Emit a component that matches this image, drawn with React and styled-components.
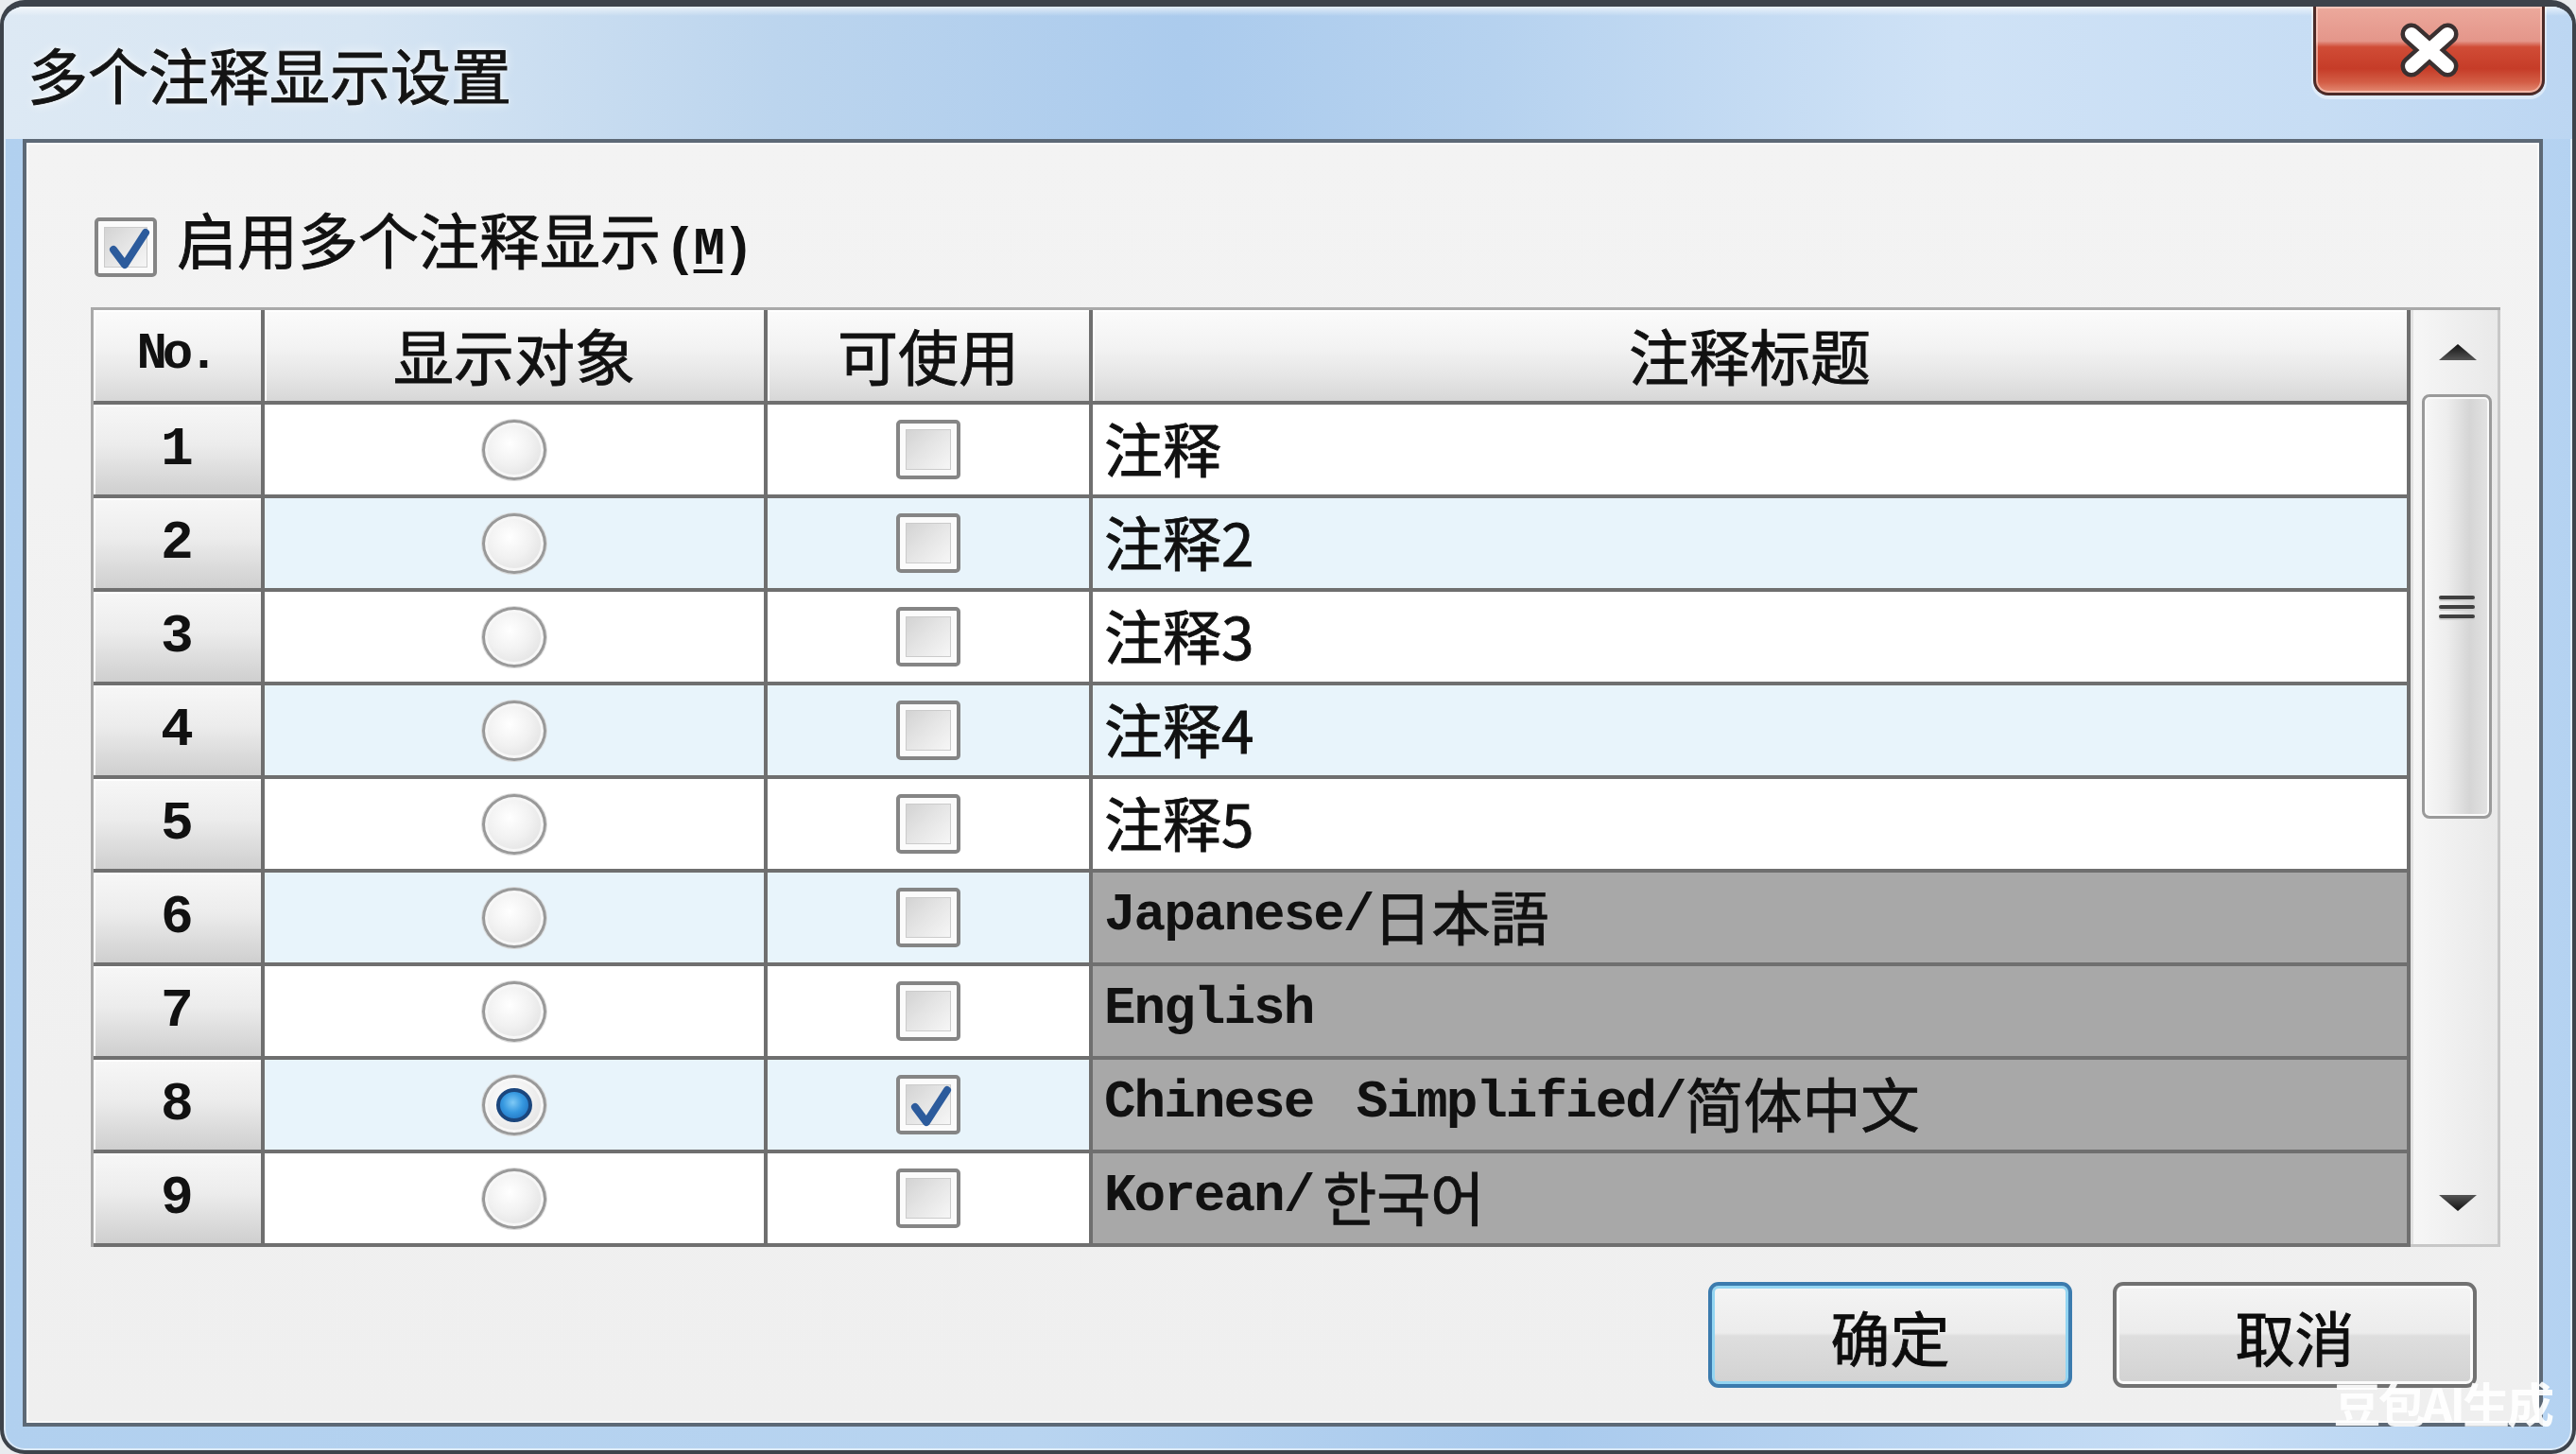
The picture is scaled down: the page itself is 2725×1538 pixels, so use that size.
import React from 'react';
import styled, { createGlobalStyle } from 'styled-components';

const CJK = `"Noto Sans CJK SC", "Noto Sans CJK JP", "Noto Sans CJK KR", "Noto Sans", sans-serif`;
const MONO = `"Liberation Mono", "DejaVu Sans Mono", "Noto Sans CJK SC", monospace`;

/* slightly heavier strokes for the dialog's CJK text */
const heavy = `-webkit-text-stroke: 0.9px currentColor;`;

const GlobalStyle = createGlobalStyle`
  html, body { margin: 0; padding: 0; background: #e9ecef; }
  body { font-family: ${CJK}; }
  *, *::before, *::after { box-sizing: border-box; }
`;

/* ---------- window frame ---------- */

const Window = styled.div`
  position: relative;
  width: 2725px;
  height: 1538px;
  display: flex;
  flex-direction: column;
  border: 4px solid #3d434b;
  border-top-width: 7px;
  border-radius: 26px;
  overflow: hidden;
  background: linear-gradient(90deg, #b1d0ef 0%, #b8d4f0 40%, #a9caed 60%, #c6ddf5 85%, #b4d2f1 100%);
  box-shadow: inset 0 0 0 2px rgba(255, 255, 255, 0.55);
`;

const TitleBar = styled.div`
  flex: none;
  height: 140px;
  display: flex;
  align-items: center;
  padding-left: 25px;
  background:
    linear-gradient(180deg, rgba(255, 255, 255, 0.65) 0px, rgba(255, 255, 255, 0) 10px),
    linear-gradient(90deg, #dde9f4 0%, #d6e5f3 14%, #bcd5ee 30%, #abcbed 46%, #b6d2ef 58%, #cfe2f6 76%, #c7ddf4 90%, #bcd6f2 100%);
`;

const Title = styled.h1`
  margin: 0;
  font-family: ${CJK};
  font-weight: 400;
  font-size: 64px;
  line-height: 1;
  color: #141414;
  ${heavy}
  text-shadow: 0 0 12px rgba(255, 255, 255, 0.95), 0 0 4px rgba(255, 255, 255, 0.8);
`;

const CloseButton = styled.div`
  margin-left: auto;
  margin-right: 29px;
  align-self: flex-start;
  width: 245px;
  height: 94px;
  display: flex;
  align-items: center;
  justify-content: center;
  border: 3px solid #4b2a27;
  border-top: none;
  border-radius: 0 0 16px 16px;
  background: linear-gradient(180deg, #eca99c 0%, #e4968a 40%, #d04c36 47%, #c63c28 72%, #d35e46 88%, #e58d76 100%);
  box-shadow: inset 0 0 0 2px rgba(255, 222, 212, 0.55), 0 2px 0 2px rgba(255, 255, 255, 0.45);
`;

const CloseGlyph = () => (
  <svg width="68" height="58" viewBox="0 0 68 58">
    <g strokeLinecap="round">
      <path d="M15 12 L53 46 M53 12 L15 46" stroke="#3a3030" strokeWidth="23" />
      <path d="M15 12 L53 46 M53 12 L15 46" stroke="#ffffff" strokeWidth="14" />
    </g>
  </svg>
);

const ClientArea = styled.div`
  flex: 1;
  margin: 0 31px 25px 20px;
  display: flex;
  flex-direction: column;
  border: 4px solid #5d6976;
  background: linear-gradient(180deg, #f3f3f3 0%, #efefef 100%);
  box-shadow: inset 0 0 0 2px #fafafa;
`;

/* ---------- option checkbox ---------- */

const OptionRow = styled.label`
  margin: 79px 0 0 72px;
  height: 63px;
  display: flex;
  align-items: center;
  gap: 21px;
  font-family: ${CJK};
  font-size: 64px;
  color: #111;
  ${heavy}
`;

const OptionText = styled.span`
  line-height: 1;
  padding-bottom: 12px;
`;

const Mnemonic = styled.span`
  font-family: ${MONO};
  font-weight: 700;
  font-size: 56px;
  letter-spacing: -3px;
  margin-left: 4px;
  -webkit-text-stroke: 0;
  u { text-decoration-thickness: 4px; text-underline-offset: 6px; }
`;

const Box = styled.span`
  position: relative;
  flex: none;
  width: ${(p) => p.$w || 68}px;
  height: 63px;
  border: 4px solid #858585;
  border-radius: 5px;
  background: #fbfbfb;
  padding: 6px;
  display: flex;
`;

const BoxFace = styled.span`
  flex: 1;
  border: 1px solid #cbcbcb;
  background: linear-gradient(135deg, #d3d3d3 0%, #e4e4e4 45%, #f6f6f6 100%);
`;

const Tick = styled.svg`
  position: absolute;
  left: 6px;
  top: 2px;
`;

const CheckBox = ({ checked, w }) => (
  <Box $w={w}>
    <BoxFace />
    {checked && (
      <Tick width="52" height="52" viewBox="0 0 52 52">
        <path d="M10 28 L22 44 L44 10" fill="none" stroke="#2c5b9c" strokeWidth="8" strokeLinecap="round" strokeLinejoin="round" />
      </Tick>
    )}
  </Box>
);

/* ---------- table ---------- */

const Table = styled.div`
  margin: 32px 0 0 68px;
  width: 2549px;
  display: grid;
  grid-template-columns: 181px 532px 344px 1394px 95px;
  grid-template-rows: 100px repeat(9, 99px);
  border-top: 3px solid #a9a9a9;
  border-left: 3px solid #a9a9a9;
`;

const gridLine = `
  border-right: 4px solid #6f6f6f;
  border-bottom: 4px solid #6f6f6f;
`;

const HeadCell = styled.div`
  ${gridLine}
  display: flex;
  align-items: center;
  justify-content: center;
  padding-bottom: 4px;
  background: linear-gradient(180deg, #fbfbfb 0%, #f3f3f3 40%, #e6e6e6 72%, #d7d7d7 100%);
  box-shadow: inset 2px 2px 0 #ffffff;
  font-family: ${CJK};
  font-size: 64px;
  color: #111;
  ${heavy}
`;

const NoLabel = styled.span`
  font-family: ${MONO};
  font-weight: 700;
  font-size: 54px;
  letter-spacing: -5px;
  padding-right: 4px;
  -webkit-text-stroke: 0;
`;

const NumCell = styled.div`
  ${gridLine}
  display: flex;
  align-items: center;
  justify-content: center;
  background: linear-gradient(180deg, #f7f7f7 0%, #ececec 45%, #dcdcdc 75%, #cfcfcf 100%);
  box-shadow: inset 2px 2px 0 #ffffff;
  font-family: ${MONO};
  font-weight: 700;
  font-size: 58px;
  color: #111;
`;

const DataCell = styled.div`
  ${gridLine}
  display: flex;
  align-items: center;
  justify-content: center;
  background: ${(p) => (p.$alt ? '#e8f4fb' : '#ffffff')};
`;

const TitleCell = styled.div`
  ${gridLine}
  display: flex;
  align-items: center;
  padding: 0 0 6px 12px;
  white-space: pre;
  font-family: ${CJK};
  font-size: 62px;
  color: #111;
  ${heavy}
  background: ${(p) => (p.$locked ? '#a8a8a8' : p.$alt ? '#e8f4fb' : '#ffffff')};
`;

const Latin = styled.span`
  font-family: ${MONO};
  font-weight: 700;
  font-size: 56px;
  letter-spacing: -2px;
  word-spacing: 14px;
  -webkit-text-stroke: 0;
`;

const Korean = styled.span`
  font-family: "Noto Sans CJK KR", ${CJK};
  margin-left: 10px;
`;

const Japanese = styled.span`
  font-family: "Noto Sans CJK JP", ${CJK};
`;

const Radio = styled.span`
  width: 68px;
  height: 64px;
  border-radius: 50%;
  border: 3px solid #999999;
  background: radial-gradient(circle at 42% 38%, #ffffff 0%, #f1f1f1 45%, #d8d8d8 100%);
  box-shadow: inset 0 0 0 3px #f7f7f7, 0 0 0 1px #d9d9d9;
  display: flex;
  align-items: center;
  justify-content: center;
`;

const RadioDot = styled.span`
  width: 38px;
  height: 36px;
  border-radius: 50%;
  border: 4px solid #1b467d;
  background: radial-gradient(circle at 45% 40%, #7fcaf6 0%, #3698e0 45%, #1864b4 100%);
`;

/* ---------- scrollbar ---------- */

const ScrollBar = styled.div`
  grid-column: 5;
  grid-row: 1 / span 10;
  display: flex;
  flex-direction: column;
  align-items: center;
  background: linear-gradient(90deg, #f7f7f7 0%, #eeeeee 60%, #e9e9e9 100%);
  border-right: 3px solid #c7c7c7;
  border-bottom: 3px solid #c7c7c7;
  box-shadow: inset 3px 0 0 #e2e2e2;
`;

const ArrowButton = styled.div`
  flex: none;
  height: 89px;
  width: 100%;
  display: flex;
  align-items: center;
  justify-content: center;
  padding-left: 8px;
`;

const Track = styled.div`
  flex: 1;
  width: 100%;
`;

const Thumb = styled.div`
  flex: none;
  width: 74px;
  height: 449px;
  margin-left: 6px;
  border: 3px solid #9a9a9a;
  border-radius: 8px;
  background: linear-gradient(90deg, #f7f7f7 0%, #ededed 35%, #d5d5d5 70%, #e3e3e3 100%);
  box-shadow: inset 0 0 0 2px #fafafa;
  display: flex;
  flex-direction: column;
  align-items: center;
  justify-content: center;
  gap: 6px;
`;

const Grip = styled.span`
  width: 38px;
  height: 4px;
  border-radius: 2px;
  background: #3f3f3f;
  box-shadow: 0 2px 0 #cfcfcf;
`;

const Arrow = ({ down }) => (
  <svg width="44" height="22" viewBox="0 0 44 22">
    <defs>
      <linearGradient id={down ? 'arrDown' : 'arrUp'} x1="0" y1="0" x2="0" y2="1">
        <stop offset="0" stopColor={down ? '#555' : '#111'} />
        <stop offset="1" stopColor={down ? '#111' : '#555'} />
      </linearGradient>
    </defs>
    <polygon
      points={down ? '2,3 42,3 22,20' : '22,2 42,19 2,19'}
      fill={`url(#${down ? 'arrDown' : 'arrUp'})`}
    />
  </svg>
);

/* ---------- buttons ---------- */

const ButtonRow = styled.div`
  margin-top: 37px;
  padding-right: 66px;
  display: flex;
  justify-content: flex-end;
  gap: 43px;
`;

const DialogButton = styled.button`
  width: 385px;
  height: 112px;
  padding: 0;
  border-radius: 11px;
  border: 4px solid ${(p) => (p.$primary ? '#3b7bae' : '#717171')};
  background: linear-gradient(180deg, #f4f4f4 0%, #ececec 48%, #dedede 51%, #d2d2d2 100%);
  box-shadow: inset 0 0 0 3px ${(p) => (p.$primary ? '#93d5f2' : '#fbfbfb')};
  font-family: ${CJK};
  font-size: 63px;
  color: #0d0d0d;
  line-height: 1;
  ${heavy}
`;

const Watermark = styled.div`
  position: absolute;
  right: 22px;
  bottom: 26px;
  font-family: ${CJK};
  font-weight: 700;
  font-size: 50px;
  letter-spacing: -3px;
  line-height: 1;
  color: rgba(255, 255, 255, 0.92);
  pointer-events: none;
`;

/* ---------- data ---------- */

const rows = [
  { n: 1, title: '注释' },
  { n: 2, title: '注释2' },
  { n: 3, title: '注释3' },
  { n: 4, title: '注释4' },
  { n: 5, title: '注释5' },
  { n: 6, locked: true, title: (<><Latin>Japanese/</Latin><Japanese>日本語</Japanese></>) },
  { n: 7, locked: true, title: <Latin>English</Latin> },
  { n: 8, locked: true, selected: true, usable: true, title: (<><Latin>Chinese Simplified/</Latin>简体中文</>) },
  { n: 9, locked: true, title: (<><Latin>Korean/</Latin><Korean>한국어</Korean></>) },
];

export default function App() {
  return (
    <>
      <GlobalStyle />
      <Window>
        <TitleBar>
          <Title>多个注释显示设置</Title>
          <CloseButton>
            <CloseGlyph />
          </CloseButton>
        </TitleBar>

        <ClientArea>
          <OptionRow>
            <CheckBox checked w={66} />
            <OptionText>
              启用多个注释显示
              <Mnemonic>(<u>M</u>)</Mnemonic>
            </OptionText>
          </OptionRow>

          <Table>
            <HeadCell><NoLabel>No.</NoLabel></HeadCell>
            <HeadCell>显示对象</HeadCell>
            <HeadCell>可使用</HeadCell>
            <HeadCell>注释标题</HeadCell>
            <ScrollBar>
              <ArrowButton><Arrow /></ArrowButton>
              <Thumb>
                <Grip />
                <Grip />
                <Grip />
              </Thumb>
              <Track />
              <ArrowButton><Arrow down /></ArrowButton>
            </ScrollBar>

            {rows.map((r) => {
              const alt = r.n % 2 === 0;
              return (
                <React.Fragment key={r.n}>
                  <NumCell>{r.n}</NumCell>
                  <DataCell $alt={alt}>
                    <Radio>{r.selected && <RadioDot />}</Radio>
                  </DataCell>
                  <DataCell $alt={alt}>
                    <CheckBox checked={r.usable} />
                  </DataCell>
                  <TitleCell $alt={alt} $locked={r.locked}>{r.title}</TitleCell>
                </React.Fragment>
              );
            })}
          </Table>

          <ButtonRow>
            <DialogButton $primary>确定</DialogButton>
            <DialogButton>取消</DialogButton>
          </ButtonRow>
        </ClientArea>

        <Watermark>豆包AI生成</Watermark>
      </Window>
    </>
  );
}
